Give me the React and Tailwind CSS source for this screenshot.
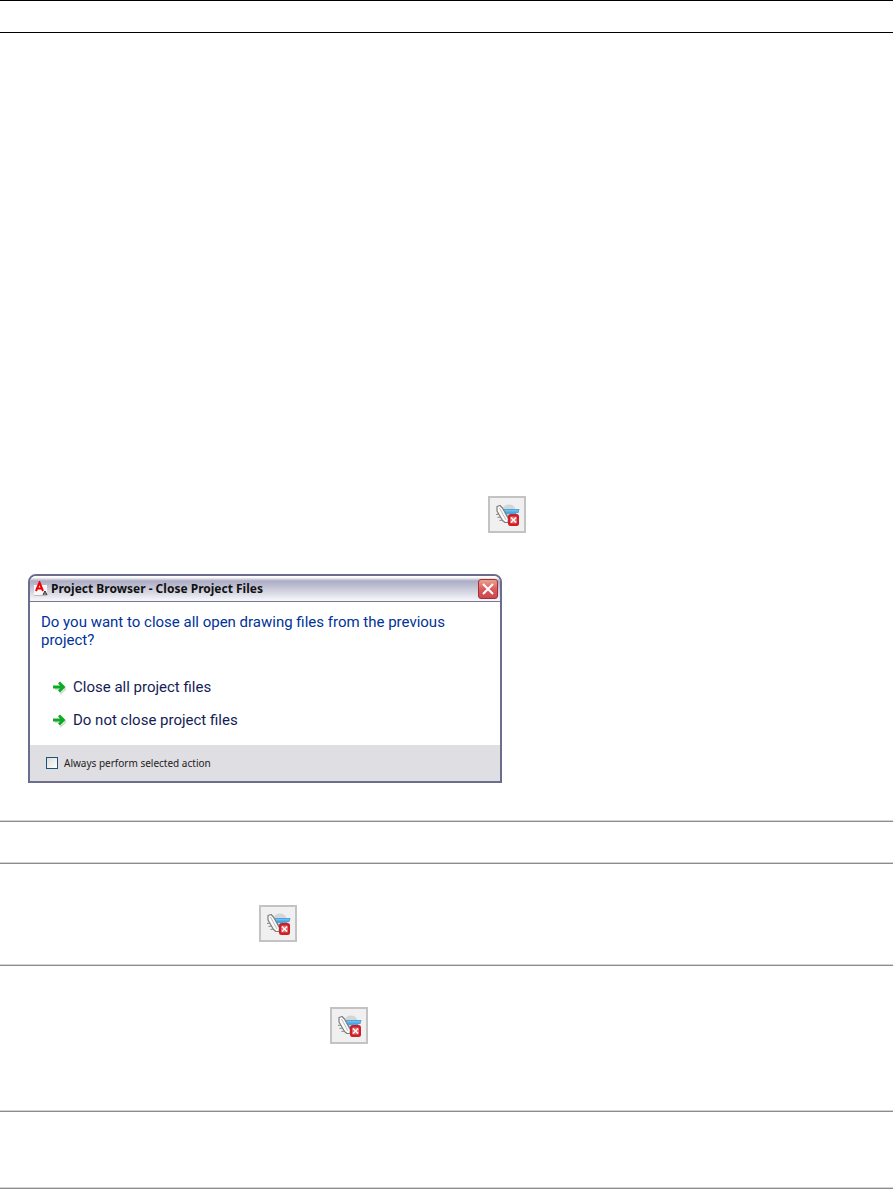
const Rule = () => (
    <hr className="mr-px h-[2px] border-0 border-t border-[#d4d4d4] bg-[#8c8c8c]" />
);

const CloseProjectButton = () => (
    <button
        type="button"
        aria-label="Close project"
        className="flex h-[37px] w-[38px] items-center justify-center border-2 border-[#c3c3c3] bg-[#f0f0f0]"
    >
        <svg width="26" height="24" viewBox="1 0 26 24" fill="none">
            <ellipse cx="16" cy="5.500" rx="6" ry="4" fill="#d3d6d8" />
            <path d="M8 6h18.500l-1 4h-2l-2 5h-7z" fill="#4ba6df" />
            <path d="M10 7h15v1.500H11z" fill="#6fbdea" />
            <path d="M14 11h7l-1 2h-5z" fill="#d8edf8" />
            <path
                d="M3 11.500l3-.5M4.500 14.500l3-.5M6.500 17.500l3-.5"
                stroke="#8a8a8a"
                strokeWidth="1.200"
            />
            <path
                d="M4 3.500L7 2.500L9.500 5L15.500 16L15 19.500L12 19.500L9.500 17.500L4 8z"
                fill="#fafafa"
                stroke="#7c7c7c"
                strokeWidth="1.200"
                strokeLinejoin="round"
            />
            <path d="M6.500 5l6.500 12" stroke="#b5b5b5" strokeWidth=".9" />
            <rect x="15" y="11" width="11" height="12" rx="2.500" fill="#cf1e25" />
            <rect x="17" y="13.500" width="7" height="7" rx="1" fill="#e56a6e" />
            <path d="M18 14.500l5 5M23 14.500l-5 5" stroke="#fff" strokeWidth="1.400" />
        </svg>
    </button>
);

const AppLogo = () => (
    <svg width="16" height="16" viewBox="0 0 16 16" fill="none">
        <path d="M1 4h13v11H1z" fill="#f7f7f7" />
        <path d="M1 14.500h13" stroke="#bbb" />
        <path
            d="M3 10L6.500 1.500L10 10M4 7.500h5"
            stroke="#f00000"
            strokeWidth="2"
        />
        <path d="M10 14l2-4 2 4M11 13h2" stroke="#222" strokeWidth="1" />
    </svg>
);

const ArrowIcon = () => (
    <svg width="14" height="14" viewBox="0 0 14 14" fill="none">
        <path d="M3 8h7M8 3l5.500 5-5.500 5" stroke="#d4ddd4" strokeWidth="2" />
        <path
            d="M1 6h9.500M7 1.500L11.500 6L7 10.500"
            stroke="#0cab24"
            strokeWidth="2.800"
        />
    </svg>
);

const choices = ["Close all project files", "Do not close project files"];

const CloseDialog = () => (
    <div
        role="dialog"
        aria-labelledby="dialog-title"
        className="w-full max-w-[474px] overflow-hidden rounded-t-lg border-2 border-[#6c6c8c] bg-white font-[Roboto,sans-serif]"
    >
        <div className="flex h-[26px] items-center border-b border-[#77778f] bg-linear-to-b from-white from-5% via-[#acacc4] via-20% to-[#f8f8fb] pr-[2px] pl-[3px]">
            <AppLogo />
            <h1
                id="dialog-title"
                className="ml-[2px] flex-1 font-['Noto_Sans',sans-serif] text-[12px] font-bold whitespace-nowrap text-[#111]"
            >
                Project Browser - Close Project Files
            </h1>
            <button
                type="button"
                aria-label="Close"
                className="flex size-5 items-center justify-center rounded-[3px] border border-[#a32f3b] bg-linear-to-b from-[#e8a08c] via-[#dc5c5c] to-[#c84a50]"
            >
                <svg width="12" height="12" viewBox="0 0 12 12">
                    <path d="M1 1l10 10M11 1L1 11" stroke="#fff" strokeWidth="2" />
                </svg>
            </button>
        </div>
        <div className="px-[11px] pt-[11px] pb-2">
            <p className="text-[15px] leading-[18px] text-[#003399]">
                Do you want to close all open drawing files from the previous
                project?
            </p>
            <ul className="mt-[22px] ml-[11px]">
                {choices.map((choice) => (
                    <li key={choice}>
                        <button
                            type="button"
                            className="flex h-[33px] items-center gap-[7px] text-[15px] text-[#151c55]"
                        >
                            <ArrowIcon />
                            {choice}
                        </button>
                    </li>
                ))}
            </ul>
        </div>
        <div className="flex h-9 items-center bg-[#dfdee3] px-4">
            <label className="flex items-center gap-[6px] font-['Noto_Sans',sans-serif] text-[10px] text-[#222]">
                <input
                    type="checkbox"
                    className="size-3 appearance-none border border-[#1c5180] bg-linear-to-br from-[#dcdcd7] to-white checked:bg-[#1c5180]"
                />
                Always perform selected action
            </label>
        </div>
    </div>
);

const App = () => (
    <main className="bg-white">
        <header className="mr-px h-[33px] border-y border-black"></header>
        <section className="pt-[463px] pb-[37px]">
            <div className="ml-[488px]">
                <CloseProjectButton />
            </div>
            <div className="mt-[41px] ml-7">
                <CloseDialog />
            </div>
        </section>
        <Rule />
        <div className="h-10"></div>
        <Rule />
        <div className="h-[100px] pt-[41px] pl-[259px]">
            <CloseProjectButton />
        </div>
        <Rule />
        <div className="h-36 pt-[41px] pl-[330px]">
            <CloseProjectButton />
        </div>
        <Rule />
        <div className="h-[75px]"></div>
        <Rule />
    </main>
);

export default App;
